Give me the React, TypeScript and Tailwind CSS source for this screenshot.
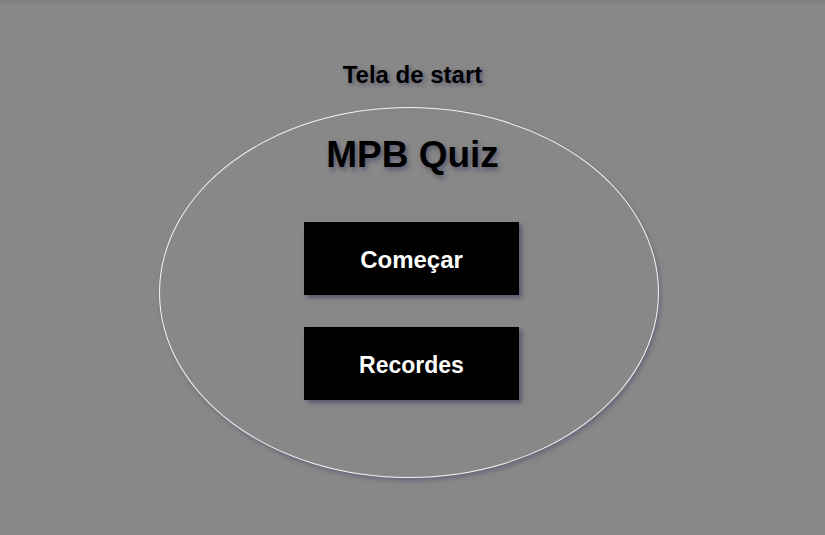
import React from "react";

export default function App() {
  const font = { fontFamily: '"Liberation Sans", Arial, sans-serif' };
  return (
    <div className="w-[825px] h-[535px] bg-[#888888] flex flex-col items-center overflow-hidden" style={font}>
      <div className="w-full h-[5px] shrink-0 bg-gradient-to-b from-[#7b7b84] to-[#888888]" />
      <div className="mt-[58px] text-[24px] leading-none font-bold text-black [text-shadow:2px_2px_4px_rgba(50,50,90,0.55)]">
        Tela de start
      </div>
      <div className="mt-[20px] mr-[8px] w-[500px] h-[371px] rounded-[50%] border border-[#f2f2f2] shadow-[2px_3px_4px_rgba(70,70,110,0.45)] flex flex-col items-center">
        <div className="mt-[28px] ml-[8px] text-[37px] leading-none font-bold text-black [text-shadow:2px_3px_5px_rgba(50,50,90,0.55)]">
          MPB Quiz
        </div>
        <div className="mt-[49px] ml-[6px] flex flex-col gap-[32px]">
          <div className="w-[215px] h-[73px] pt-[2px] bg-black flex items-center justify-center text-white text-[24px] font-bold shadow-[3px_3px_4px_rgba(60,60,100,0.6)]">
            Começar
          </div>
          <div className="w-[215px] h-[73px] pt-[3px] bg-black flex items-center justify-center text-white text-[23px] font-bold shadow-[3px_3px_4px_rgba(60,60,100,0.6)]">
            Recordes
          </div>
        </div>
      </div>
    </div>
  );
}
